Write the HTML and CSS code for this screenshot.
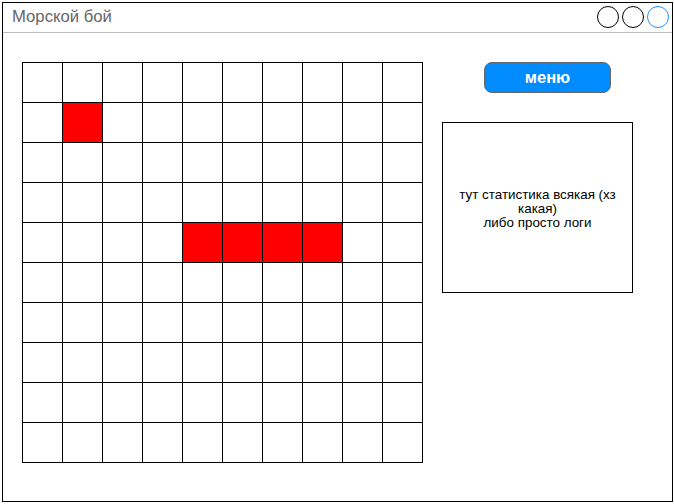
FILE: index.html
```html
<!DOCTYPE html>
<html>
<head>
<meta charset="utf-8">
<link rel="stylesheet" href="styles.css">
</head>
<body>
<div class="window">
  <div class="titlebar">
    <span class="title">Морской бой</span>
    <div class="controls">
      <span class="ctl"></span><span class="ctl"></span><span class="ctl active"></span>
    </div>
  </div>
  <div class="content">
    <div class="board">
      <div class="c"></div><div class="c"></div><div class="c"></div><div class="c"></div><div class="c"></div><div class="c"></div><div class="c"></div><div class="c"></div><div class="c"></div><div class="c"></div>
      <div class="c"></div><div class="c hit"></div><div class="c"></div><div class="c"></div><div class="c"></div><div class="c"></div><div class="c"></div><div class="c"></div><div class="c"></div><div class="c"></div>
      <div class="c"></div><div class="c"></div><div class="c"></div><div class="c"></div><div class="c"></div><div class="c"></div><div class="c"></div><div class="c"></div><div class="c"></div><div class="c"></div>
      <div class="c"></div><div class="c"></div><div class="c"></div><div class="c"></div><div class="c"></div><div class="c"></div><div class="c"></div><div class="c"></div><div class="c"></div><div class="c"></div>
      <div class="c"></div><div class="c"></div><div class="c"></div><div class="c"></div><div class="c hit"></div><div class="c hit"></div><div class="c hit"></div><div class="c hit"></div><div class="c"></div><div class="c"></div>
      <div class="c"></div><div class="c"></div><div class="c"></div><div class="c"></div><div class="c"></div><div class="c"></div><div class="c"></div><div class="c"></div><div class="c"></div><div class="c"></div>
      <div class="c"></div><div class="c"></div><div class="c"></div><div class="c"></div><div class="c"></div><div class="c"></div><div class="c"></div><div class="c"></div><div class="c"></div><div class="c"></div>
      <div class="c"></div><div class="c"></div><div class="c"></div><div class="c"></div><div class="c"></div><div class="c"></div><div class="c"></div><div class="c"></div><div class="c"></div><div class="c"></div>
      <div class="c"></div><div class="c"></div><div class="c"></div><div class="c"></div><div class="c"></div><div class="c"></div><div class="c"></div><div class="c"></div><div class="c"></div><div class="c"></div>
      <div class="c"></div><div class="c"></div><div class="c"></div><div class="c"></div><div class="c"></div><div class="c"></div><div class="c"></div><div class="c"></div><div class="c"></div><div class="c"></div>
    </div>
    <div class="side">
      <button class="menu">меню</button>
      <div class="stats">
        <p class="stats-text">тут статистика всякая (хз<br>какая)<br>либо просто логи</p>
      </div>
    </div>
  </div>
</div>
</body>
</html>
```

FILE: styles.css
```css
html, body {
  margin: 0;
  padding: 0;
  background: #fff;
  font-family: "Liberation Sans", Arial, sans-serif;
}
.window {
  margin: 2px 0 0 2px;
  width: 671px;
  height: 500px;
  border: 1px solid #000;
  box-sizing: border-box;
}
.titlebar {
  height: 30px;
  box-sizing: border-box;
  border-bottom: 1px solid #bdbdbd;
  display: flex;
  align-items: center;
  justify-content: space-between;
  padding: 0 3px 0 9px;
}
.title {
  font-size: 16.7px;
  color: #666;
  margin-top: -1px;
}
.controls {
  display: flex;
  gap: 3px;
  margin-top: -2px;
}
.ctl {
  width: 20px;
  height: 20px;
  border: 1px solid #000;
  border-radius: 50%;
}
.ctl.active {
  border-color: #1e90ff;
}
.content {
  display: flex;
  gap: 19px;
  padding: 29px 0 0 19px;
}
.board {
  display: grid;
  grid-template-columns: repeat(10, 39px);
  grid-template-rows: repeat(10, 39px);
  gap: 1px;
  padding: 1px;
  background: #000;
}
.c {
  background: #fff;
}
.c.hit {
  background: #ff0000;
}
.side {
  width: 191px;
  display: flex;
  flex-direction: column;
  align-items: flex-start;
  gap: 29px;
}
.menu {
  width: 127px;
  height: 31px;
  border: 1px solid #666;
  border-radius: 8px;
  background: #008cff;
  color: #fff;
  font-family: "Liberation Sans", Arial, sans-serif;
  font-weight: bold;
  font-size: 16.5px;
  padding: 0;
  margin-left: 42px;
}
.stats {
  width: 191px;
  height: 171px;
  box-sizing: border-box;
  border: 1px solid #000;
  display: flex;
  align-items: center;
  justify-content: center;
}
.stats-text {
  margin: 2px 0 0 0;
  text-align: center;
  font-size: 13.4px;
  line-height: 14px;
  color: #000;
}
```
